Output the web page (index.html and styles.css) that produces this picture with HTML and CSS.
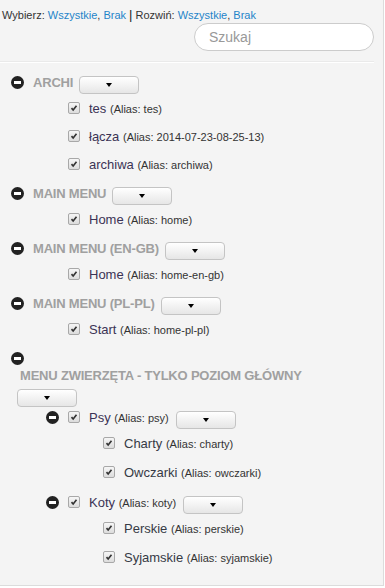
FILE: index.html
```html
<!DOCTYPE html>
<html>

<head>
    <meta charset="UTF-8">
    <title>Menu</title>

    <link rel="stylesheet" href="styles.css">
</head>

<body>
<div class="panel">
    <div class="toolbar">
        <div class="select-links">
            Wybierz: <a href="#">Wszystkie</a>, <a href="#">Brak</a> <span class="sep">|</span> Rozwiń: <a href="#">Wszystkie</a>, <a href="#">Brak</a>
        </div>
        <div class="search-row">
            <input type="text" class="search" placeholder="Szukaj">
        </div>
    </div>
    <hr class="divider">

    <ul class="tree">
        <li class="branch">
            <div class="node">
                <span class="toggle"></span>
                <span class="menu-title">ARCHI</span>
                <button class="drop"><span class="caret"></span></button>
            </div>
            <ul>
                <li>
                    <div class="node leaf">
                        <span class="check"><svg viewBox="0 0 12 12"><path d="M3 6.2 L5 8.4 L9 3.4"/></svg></span>
                        <span class="label">tes <small class="alias">(Alias: tes)</small></span>
                    </div>
                </li>
                <li>
                    <div class="node leaf">
                        <span class="check"><svg viewBox="0 0 12 12"><path d="M3 6.2 L5 8.4 L9 3.4"/></svg></span>
                        <span class="label">łącza <small class="alias">(Alias: 2014-07-23-08-25-13)</small></span>
                    </div>
                </li>
                <li>
                    <div class="node leaf">
                        <span class="check"><svg viewBox="0 0 12 12"><path d="M3 6.2 L5 8.4 L9 3.4"/></svg></span>
                        <span class="label">archiwa <small class="alias">(Alias: archiwa)</small></span>
                    </div>
                </li>
            </ul>
        </li>

        <li class="branch">
            <div class="node">
                <span class="toggle"></span>
                <span class="menu-title">MAIN MENU</span>
                <button class="drop"><span class="caret"></span></button>
            </div>
            <ul>
                <li>
                    <div class="node leaf">
                        <span class="check"><svg viewBox="0 0 12 12"><path d="M3 6.2 L5 8.4 L9 3.4"/></svg></span>
                        <span class="label">Home <small class="alias">(Alias: home)</small></span>
                    </div>
                </li>
            </ul>
        </li>

        <li class="branch">
            <div class="node">
                <span class="toggle"></span>
                <span class="menu-title">MAIN MENU (EN-GB)</span>
                <button class="drop"><span class="caret"></span></button>
            </div>
            <ul>
                <li>
                    <div class="node leaf">
                        <span class="check"><svg viewBox="0 0 12 12"><path d="M3 6.2 L5 8.4 L9 3.4"/></svg></span>
                        <span class="label">Home <small class="alias">(Alias: home-en-gb)</small></span>
                    </div>
                </li>
            </ul>
        </li>

        <li class="branch">
            <div class="node">
                <span class="toggle"></span>
                <span class="menu-title">MAIN MENU (PL-PL)</span>
                <button class="drop"><span class="caret"></span></button>
            </div>
            <ul>
                <li>
                    <div class="node leaf">
                        <span class="check"><svg viewBox="0 0 12 12"><path d="M3 6.2 L5 8.4 L9 3.4"/></svg></span>
                        <span class="label">Start <small class="alias">(Alias: home-pl-pl)</small></span>
                    </div>
                </li>
            </ul>
        </li>

        <li class="branch">
            <div class="node">
                <span class="toggle"></span>
                <span class="menu-title">MENU ZWIERZĘTA - TYLKO POZIOM GŁÓWNY</span>
                <button class="drop"><span class="caret"></span></button>
            </div>
            <ul>
                <li class="branch">
                    <div class="node">
                        <span class="toggle"></span>
                        <span class="check"><svg viewBox="0 0 12 12"><path d="M3 6.2 L5 8.4 L9 3.4"/></svg></span>
                        <span class="label">Psy <small class="alias">(Alias: psy)</small></span>
                        <button class="drop"><span class="caret"></span></button>
                    </div>
                    <ul>
                        <li>
                            <div class="node leaf">
                                <span class="check"><svg viewBox="0 0 12 12"><path d="M3 6.2 L5 8.4 L9 3.4"/></svg></span>
                                <span class="label">Charty <small class="alias">(Alias: charty)</small></span>
                            </div>
                        </li>
                        <li>
                            <div class="node leaf">
                                <span class="check"><svg viewBox="0 0 12 12"><path d="M3 6.2 L5 8.4 L9 3.4"/></svg></span>
                                <span class="label">Owczarki <small class="alias">(Alias: owczarki)</small></span>
                            </div>
                        </li>
                    </ul>
                </li>
                <li class="branch">
                    <div class="node">
                        <span class="toggle"></span>
                        <span class="check"><svg viewBox="0 0 12 12"><path d="M3 6.2 L5 8.4 L9 3.4"/></svg></span>
                        <span class="label">Koty <small class="alias">(Alias: koty)</small></span>
                        <button class="drop"><span class="caret"></span></button>
                    </div>
                    <ul>
                        <li>
                            <div class="node leaf">
                                <span class="check"><svg viewBox="0 0 12 12"><path d="M3 6.2 L5 8.4 L9 3.4"/></svg></span>
                                <span class="label">Perskie <small class="alias">(Alias: perskie)</small></span>
                            </div>
                        </li>
                        <li>
                            <div class="node leaf">
                                <span class="check"><svg viewBox="0 0 12 12"><path d="M3 6.2 L5 8.4 L9 3.4"/></svg></span>
                                <span class="label">Syjamskie <small class="alias">(Alias: syjamskie)</small></span>
                            </div>
                        </li>
                    </ul>
                </li>
            </ul>
        </li>
    </ul>
</div>
</body>

</html>
```

FILE: styles.css
```css
body {
    margin: 0;
    font-family: "Liberation Sans", Arial, sans-serif;
    color: #333;
    background: #fff;
}

.panel {
    width: 384px;
    box-sizing: border-box;
    padding: 7px 9px 8px 0;
    background: #f4f4f4;
    border-right: 1px solid #dcdcdc;
    border-bottom: 1px solid #dcdcdc;
}

/* select / expand links + search */
.select-links {
    padding-left: 2px;
    font-size: 11px;
    line-height: 16px;
}

.select-links a {
    color: #1f84c9;
    text-decoration: none;
}

.sep {
    font-size: 13px;
    color: #222;
}

.search-row {
    display: flex;
    justify-content: flex-end;
}

.search {
    width: 180px;
    height: 28px;
    box-sizing: border-box;
    padding: 0 14px;
    border: 1px solid #ccc;
    border-radius: 14px;
    background: #fff;
    font-family: inherit;
    font-size: 14px;
    color: #333;
    outline: none;
}

.search::placeholder {
    color: #999;
}

.divider {
    margin: 10px 0 0;
    border: 0;
    border-top: 1px solid #eaeaea;
    border-bottom: 1px solid #fff;
}

/* tree */
.tree {
    list-style: none;
    width: 300px;
    margin: 9px 0 0;
    padding: 0 0 0 11px;
}

.tree ul {
    list-style: none;
    margin: 0;
    padding-left: 35px;
}

.branch {
    margin-bottom: 5px;
}

.node {
    display: flex;
    flex-wrap: wrap;
    align-items: flex-start;
}

.node.leaf {
    padding: 4px 0 4px 22px;
}

/* third level rows sit a little looser */
.tree ul ul .node.leaf {
    padding-bottom: 5px;
}

.toggle {
    position: relative;
    flex: none;
    width: 13px;
    height: 13px;
    margin-top: 4px;
    border-radius: 50%;
    background: #222;
}

.toggle::after {
    content: "";
    position: absolute;
    left: 3px;
    top: 5px;
    width: 7px;
    height: 3px;
    background: #fff;
}

.menu-title {
    margin: 2px 0 0 9px;
    font-size: 13px;
    font-weight: bold;
    line-height: 18px;
    letter-spacing: -0.2px;
    color: #a0a0a0;
}

.check {
    flex: none;
    width: 12px;
    height: 12px;
    box-sizing: border-box;
    margin-top: 4px;
    border: 1px solid #a8a8a8;
    border-radius: 2px;
    background: linear-gradient(#f6f6f6, #dcdcdc);
}

.toggle + .check {
    margin-left: 9px;
}

.check svg {
    display: block;
    width: 10px;
    height: 10px;
}

.check path {
    fill: none;
    stroke: #333;
    stroke-width: 2;
}

.label {
    margin: 2px 0 0 9px;
    font-size: 13px;
    line-height: 18px;
    color: #3b3355;
}

.tree ul ul .label {
    color: #363a45;
}

.alias {
    font-size: 11px;
    color: #333;
}

.drop {
    flex: none;
    width: 60px;
    height: 18px;
    margin: 4px 0 0 6px;
    padding: 0;
    border: 1px solid #c4c4c4;
    border-radius: 4px;
    background: linear-gradient(#fff, #e6e6e6);
    display: flex;
    align-items: center;
    justify-content: center;
}

.label + .drop {
    margin-left: 7px;
}

.caret {
    width: 0;
    height: 0;
    border-top: 4px solid #000;
    border-left: 3.5px solid transparent;
    border-right: 3.5px solid transparent;
}
```
